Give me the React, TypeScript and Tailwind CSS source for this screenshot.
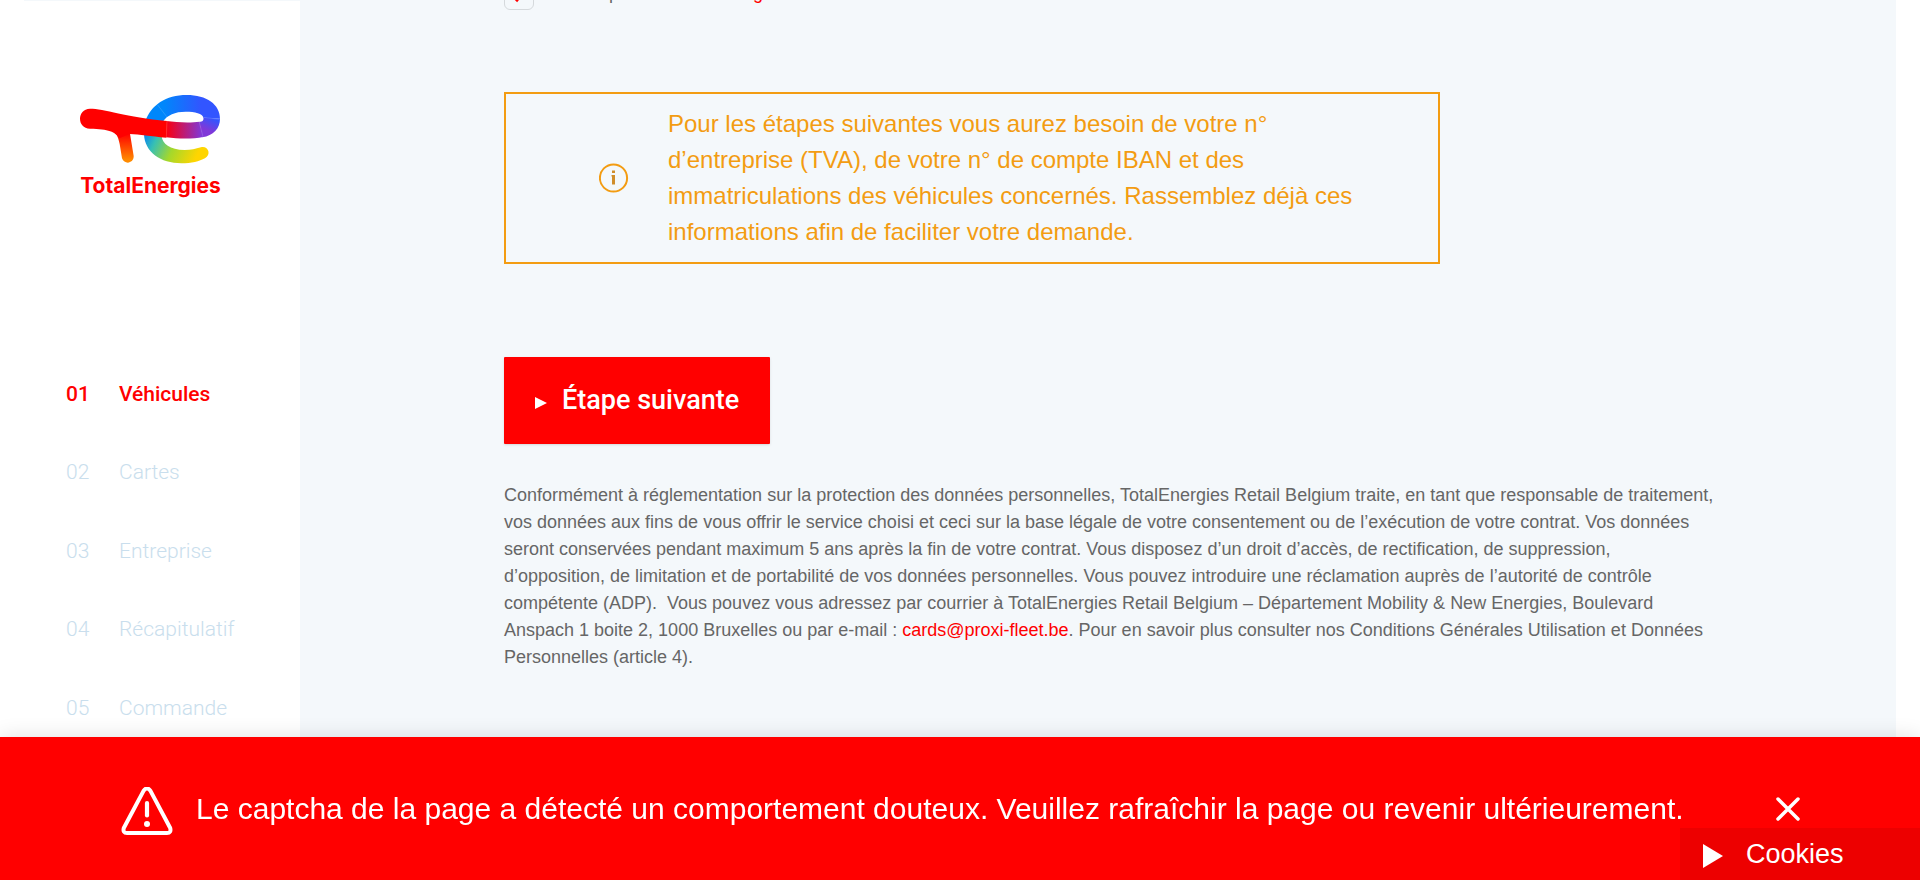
import React from "react";

const steps = [
  { number: "01", label: "Véhicules" },
  { number: "02", label: "Cartes" },
  { number: "03", label: "Entreprise" },
  { number: "04", label: "Récapitulatif" },
  { number: "05", label: "Commande" },
];

function Logo() {
  return (
    <a href="#" className="block w-[141px]">
      <svg viewBox="30 30 423 206" className="block w-full" aria-hidden="true">
        <defs>
          <linearGradient id="loop-top" gradientUnits="userSpaceOnUse" x1="225" y1="0" x2="450" y2="0">
            <stop offset="0.25" stopColor="#0087fb" />
            <stop offset="0.75" stopColor="#3255ff" />
          </linearGradient>
          <linearGradient id="bar" gradientUnits="userSpaceOnUse" x1="290" y1="0" x2="395" y2="0">
            <stop offset="0" stopColor="#fa0010" />
            <stop offset="1" stopColor="#8038d8" />
          </linearGradient>
          <linearGradient id="turn" gradientUnits="userSpaceOnUse" x1="405" y1="140" x2="425" y2="98">
            <stop offset="0.15" stopColor="#8038d8" />
            <stop offset="1" stopColor="#3255ff" />
          </linearGradient>
          <linearGradient id="stem" gradientUnits="userSpaceOnUse" x1="0" y1="145" x2="0" y2="225">
            <stop offset="0" stopColor="#ff0000" />
            <stop offset="1" stopColor="#ff8a00" />
          </linearGradient>
          <linearGradient id="loop-low" gradientUnits="userSpaceOnUse" x1="225" y1="155" x2="375" y2="225">
            <stop offset="0" stopColor="#0d8be8" />
            <stop offset="0.2" stopColor="#36bfb5" />
            <stop offset="0.55" stopColor="#a5d82b" />
            <stop offset="1" stopColor="#ffd500" />
          </linearGradient>
        </defs>
        <path fill="url(#loop-low)" d="M222 148C224 202 272 235 334 235C365 235 388 229 405 220C425 209 415 182 393 187C376 192 364 195 344 195C300 195 276 175 275 153Z" />
        <path fill="url(#loop-top)" d="M226 110C242 60 288 30 350 30C410 30 450 58 450 101L400 98C398 86 375 80 347 80C315 80 292 90 278 110Z" />
        <path fill="url(#turn)" d="M400 97C402 107 398 110 388 111L397 157C430 151 450 130 450 101Z" />
        <path fill="url(#bar)" d="M289 108C320 112 360 114 389 110L399 156C370 162 330 162 288 157Z" />
        <path fill="url(#stem)" d="M110 130C140 137 144 156 149 177L156 220C164 241 192 235 191 213L179 140Z" />
        <path fill="#ff0000" d="M60 71C100 71 170 96 291 108L289 158C240 154 210 148 179 147L148 160C136 140 116 132 60 131C20 131 20 72 60 71Z" />
        <path fill="none" stroke="#ffffff" strokeOpacity="0.3" strokeWidth="1.5" d="M263 60L290 95M291 108L289 158M388 112L399 155M400 97L448 103" />
      </svg>
      <span className="mt-2 block text-center font-[Inter] text-[21px] leading-7 font-bold text-[#ff0000]">TotalEnergies</span>
    </a>
  );
}

function Sidebar() {
  return (
    <aside className="w-[276px] shrink-0 border-t border-[#f4f8fb] bg-white pt-[94px]">
      <div className="pl-14">
        <Logo />
      </div>
      <nav className="mt-[182px] pb-10 pl-[42px]">
        <ol className="flex h-[338px] flex-col justify-between font-[Roboto] text-[21px] leading-6">
          {steps.map((step, index) => (
            <li key={step.number}>
              <a
                href="#"
                className={index === 0 ? "flex font-medium text-[#ff0000]" : "flex font-light text-[#c9deed]"}
              >
                <span className="w-[53px]">{step.number}</span>
                <span>{step.label}</span>
              </a>
            </li>
          ))}
        </ol>
      </nav>
    </aside>
  );
}

function Content() {
  return (
    <main className="min-w-0 flex-1 bg-[#f4f8fb] pr-[180px] pl-[204px] text-[#666666]">
      <div className="-mt-5 flex items-start">
        <input
          id="terms"
          type="checkbox"
          defaultChecked
          className="peer h-[30px] w-[30px] shrink-0 appearance-none rounded-md border border-[#d5d9dc]"
        />
        <svg viewBox="0 0 30 30" className="pointer-events-none -ml-[30px] h-[30px] w-[30px] shrink-0" aria-hidden="true">
          <path d="M8 15L13 20L22 9" fill="none" stroke="#ff0000" strokeWidth="3" />
        </svg>
        <label htmlFor="terms" className="ml-6 text-lg leading-[27px]">
          J’accepte les <a href="#" className="text-[#ff0000]">conditions générales</a>
        </label>
      </div>

      <div className="mt-[82px] flex max-w-[936px] items-center border-2 border-[#f39c12] py-3 pr-16 pl-[93px] text-[#f39c12]">
        <svg viewBox="0 0 30 30" className="h-[30px] w-[30px] shrink-0" aria-hidden="true">
          <circle cx="14.5" cy="15" r="13.6" fill="none" stroke="#f39c12" strokeWidth="2" />
          <path d="M13 7.500H16V10H13ZM12.500 12H16V21.500H13V13.500H12.500Z" fill="#d08d2a" />
        </svg>
        <p className="ml-[39px] text-2xl leading-9">
          Pour les étapes suivantes vous aurez besoin de votre n° d’entreprise (TVA), de votre n° de compte IBAN et des
          immatriculations des véhicules concernés. Rassemblez déjà ces informations afin de faciliter votre demande.
        </p>
      </div>

      <button
        type="button"
        className="mt-[93px] flex h-[87px] items-center rounded-[1px] bg-[#ff0000] px-[31px] font-[Roboto] text-[27px] font-medium text-white shadow-sm"
      >
        <svg viewBox="0 0 12 12" className="mt-1 mr-[15px] h-3 w-3" aria-hidden="true">
          <path d="M0 0L12 6L0 12Z" fill="currentColor" />
        </svg>
        Étape suivante
      </button>

      <p className="mt-[38px] pb-24 text-lg leading-[27px]">
        Conformément à réglementation sur la protection des données personnelles, TotalEnergies Retail Belgium traite,
        en tant que responsable de traitement, vos données aux fins de vous offrir le service choisi et ceci sur la base
        légale de votre consentement ou de l’exécution de votre contrat. Vos données seront conservées pendant maximum 5
        ans après la fin de votre contrat. Vous disposez d’un droit d’accès, de rectification, de suppression,
        d’opposition, de limitation et de portabilité de vos données personnelles. Vous pouvez introduire une
        réclamation auprès de l’autorité de contrôle compétente (ADP).&nbsp; Vous pouvez vous adressez par courrier à
        TotalEnergies Retail Belgium – Département Mobility &amp; New Energies, Boulevard Anspach 1 boite 2, 1000
        Bruxelles ou par e-mail :{" "}
        <a href="mailto:cards@proxi-fleet.be" className="text-[#ff0000]">cards@proxi-fleet.be</a>. Pour en savoir plus
        consulter nos Conditions Générales Utilisation et Données Personnelles (article 4).
      </p>
    </main>
  );
}

function CaptchaBanner() {
  return (
    <div
      role="alert"
      className="fixed inset-x-0 bottom-0 flex h-[143px] items-center bg-[#ff0000] pr-[120px] pl-[121px] text-white shadow-[0_0_20px_rgba(0,0,0,0.12)]"
    >
      <svg viewBox="0 0 52 48" className="mt-1 h-12 w-[52px] shrink-0" aria-hidden="true">
        <path
          d="M22.8 3.4Q26 -0.6 29.2 3.4L49.2 41Q50.5 46 46 46H6Q1.500 46 2.800 41Z"
          fill="none"
          stroke="currentColor"
          strokeWidth="4"
          strokeLinejoin="round"
        />
        <path d="M26 16V28.500" stroke="currentColor" strokeWidth="4.200" strokeLinecap="round" />
        <circle cx="26" cy="37" r="3" fill="currentColor" />
      </svg>
      <p className="ml-[23px] flex-1 text-[30px] leading-9">
        Le captcha de la page a détecté un comportement douteux. Veuillez rafraîchir la page ou revenir ultérieurement.
      </p>
      <button type="button" aria-label="Fermer" className="shrink-0">
        <svg viewBox="0 0 24 24" className="h-6 w-6" aria-hidden="true">
          <path d="M2 2L22 22M22 2L2 22" stroke="currentColor" strokeWidth="3.500" strokeLinecap="round" />
        </svg>
      </button>
    </div>
  );
}

export default function App() {
  return (
    <div className="min-h-screen bg-white px-6 font-['Liberation_Sans',Arial,sans-serif]">
      <div className="flex overflow-hidden">
        <Sidebar />
        <Content />
      </div>
      <CaptchaBanner />
      <button
        type="button"
        className="fixed right-0 bottom-0 flex h-[52px] w-60 items-center bg-[#ed0000] pl-[23px] text-[27px] text-white"
      >
        <svg viewBox="0 0 20 24" className="mt-1 mr-[23px] h-6 w-5" aria-hidden="true">
          <path d="M0 0L20 12L0 24Z" fill="currentColor" />
        </svg>
        Cookies
      </button>
    </div>
  );
}
